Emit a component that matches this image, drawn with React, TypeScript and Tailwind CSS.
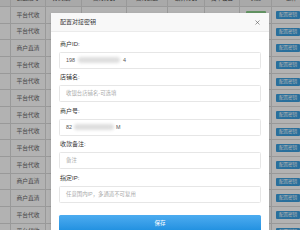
import { X } from 'lucide-react'

const rows = [
  '平台代收', '平台代收', '商户直清', '平台代收', '平台代收', '平台代收', '平台代收',
  '平台代收', '平台代收', '平台代收', '商户直清', '商户直清', '平台代收', '平台代收',
]

const headers = ['', '通道编号', '分润账户', '支付方式', '支付通道', '结算方式', '费率设置', '状态', '操作']

const cols = 'grid grid-cols-[11px_35px_36px_45px_41px_37px_35px_32px_40px]'

function Field({ label, children }: { label: string; children: React.ReactNode }) {
  return (
    <div className="mb-[5.5px]">
      <div className="h-[7px] leading-[7px] text-[6px] text-[#333] mb-[4px] pl-[1px]">{label}</div>
      <div className="h-[17px] border border-[#e6e6e6] rounded-[1.5px] bg-white flex items-center pl-[6px] text-[5.4px]">
        {children}
      </div>
    </div>
  )
}

export default function App() {
  return (
    <div
      className="relative w-[300px] h-[230px] overflow-hidden bg-white"
      style={{ fontFamily: '"Liberation Sans", "Noto Sans CJK SC", sans-serif' }}
    >
      {/* table behind the dialog */}
      <div className="-mt-[9.5px] w-[340px]">
        <div className={`${cols} h-[16.67px] bg-[#f2f2f2] border-b border-[#dcdcdc]`}>
          {headers.map((h, i) => (
            <div key={i} className="border-r border-[#dcdcdc] flex items-center justify-center text-[5.5px] text-[#333] whitespace-nowrap overflow-hidden">
              {h}
            </div>
          ))}
        </div>
        {rows.map((r, i) => (
          <div key={i} className={`${cols} h-[16.67px] border-b border-[#dcdcdc]`}>
            <div className="border-r border-[#dcdcdc]" />
            <div className="border-r border-[#dcdcdc] flex items-center justify-center text-[5.8px] text-[#666]">{r}</div>
            <div className="border-r border-[#dcdcdc]" />
            <div className="border-r border-[#dcdcdc]" />
            <div className="border-r border-[#dcdcdc]" />
            <div className="border-r border-[#dcdcdc]" />
            <div className="border-r border-[#dcdcdc]" />
            <div className="border-r border-[#dcdcdc] flex items-center justify-center">
              {i === 0 && <div className="w-[20px] h-[8px] rounded-[1px] bg-[#8fd38f]" />}
            </div>
            <div className="flex items-center pl-[4px]">
              <div className="h-[8px] px-[3px] rounded-[1px] bg-[#3a9fe0] text-white text-[4.5px] leading-[8px] whitespace-nowrap">
                配置密钥
              </div>
            </div>
          </div>
        ))}
      </div>

      {/* overlay */}
      <div className="absolute inset-0 bg-black/30" />

      {/* dialog */}
      <div className="absolute left-[51px] top-[13px] w-[218px] h-[240px] bg-white shadow-sm">
        <div className="h-[19px] bg-[#f8f8f8] border-b border-[#ebebeb] flex items-center justify-between pl-[9px] pr-[8px]">
          <span className="text-[6px] text-[#333]">配置对接密钥</span>
          <X className="w-[7px] h-[7px] text-[#555]" strokeWidth={2} />
        </div>
        <div className="px-[8px] pt-[8.5px]">
          <Field label="商户ID:">
            <span className="text-[#555]">198</span>
            <span className="inline-block w-[42px] h-[6px] mx-[3px] bg-[#dedede] rounded-full blur-[1.5px]" />
            <span className="text-[#555]">4</span>
          </Field>
          <Field label="店铺名:">
            <span className="text-[#aaa]">收银台店铺名-可选填</span>
          </Field>
          <Field label="商户号:">
            <span className="text-[#555]">82</span>
            <span className="inline-block w-[40px] h-[6px] mx-[2px] bg-[#dedede] rounded-full blur-[1.5px]" />
            <span className="text-[#555]">M</span>
          </Field>
          <Field label="收款备注:">
            <span className="text-[#aaa]">备注</span>
          </Field>
          <Field label="指定IP:">
            <span className="text-[#aaa]">任意国内IP，多通道不可复用</span>
          </Field>
          <button className="w-full h-[16px] rounded-[1.5px] bg-gradient-to-b from-[#4cacf0] to-[#1f90e0] text-white text-[5.5px]">
            保存
          </button>
        </div>
      </div>
    </div>
  )
}
